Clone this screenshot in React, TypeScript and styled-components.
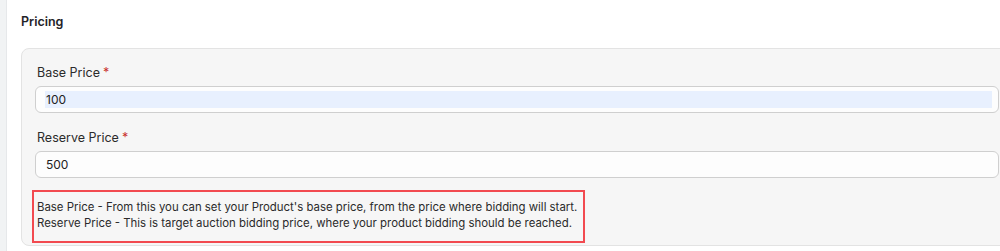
import React from "react";
import styled, { createGlobalStyle } from "styled-components";

const GlobalStyle = createGlobalStyle`
  * { box-sizing: border-box; }
  html, body { margin: 0; padding: 0; background: #ffffff; }
  body { font-family: Inter, "Noto Sans", sans-serif; color: #212529; }
`;

const Page = styled.div({
  display: "flex",
  width: "1000px",
  height: "251px",
  overflow: "hidden",
});

const SideStrip = styled.div({
  width: "7px",
  flexShrink: 0,
  background: "#f1f3f4",
  borderRight: "1px solid #e6e8ea",
});

const Content = styled.div({
  flex: 1,
  padding: "13px 0 0 14px",
  minWidth: 0,
});

const SectionTitle = styled.h3({
  margin: "0 0 17px 0",
  fontSize: "12.5px",
  fontWeight: 600,
  lineHeight: "18px",
  color: "#1f2328",
});

const Card = styled.div({
  marginRight: "-20px",
  background: "#f6f6f6",
  border: "1px solid #e3e3e3",
  borderRadius: "8px",
  padding: "15px 20px 2px 10px",
});

const Field = styled.div({
  display: "flex",
  flexDirection: "column",
  gap: "4px",
  marginBottom: "16px",
  marginLeft: "3px",
});

const Label = styled.label({
  fontSize: "12.5px",
  lineHeight: "18px",
  color: "#2b2b2b",
  paddingLeft: "2px",
});

const Required = styled.span({
  color: "#c9302c",
  marginLeft: "3px",
});

const InputWrap = styled.div({
  height: "27px",
  background: "#fdfdfd",
  border: "1px solid #cfcfcf",
  borderRadius: "6px",
  padding: "4px 6px 4px 9px",
  display: "flex",
});

const Input = styled.input<{ $filled?: boolean }>((p) => ({
  flex: 1,
  border: "none",
  outline: "none",
  background: p.$filled ? "#e8f0fe" : "transparent",
  fontFamily: "Inter, 'Noto Sans', sans-serif",
  fontSize: "12px",
  color: "#222",
  padding: "0 0 0 1px",
  height: "17px",
}));

const Note = styled.div({
  display: "inline-block",
  border: "2px solid #f24a50",
  padding: "7px 6px 10px 3px",
  fontSize: "11.4px",
  lineHeight: "16px",
  color: "#2b2b2b",
  marginTop: "-4px",
  marginBottom: "0",
});

export default function App() {
  return (
    <>
      <GlobalStyle />
      <Page>
        <SideStrip />
        <Content>
          <SectionTitle>Pricing</SectionTitle>
          <Card>
            <Field>
              <Label>
                Base Price<Required>*</Required>
              </Label>
              <InputWrap>
                <Input $filled defaultValue="100" />
              </InputWrap>
            </Field>
            <Field>
              <Label>
                Reserve Price<Required>*</Required>
              </Label>
              <InputWrap>
                <Input defaultValue="500" />
              </InputWrap>
            </Field>
            <Note>
              Base Price - From this you can set your Product's base price, from the price where bidding will start.
              <br />
              Reserve Price - This is target auction bidding price, where your product bidding should be reached.
            </Note>
          </Card>
        </Content>
      </Page>
    </>
  );
}
